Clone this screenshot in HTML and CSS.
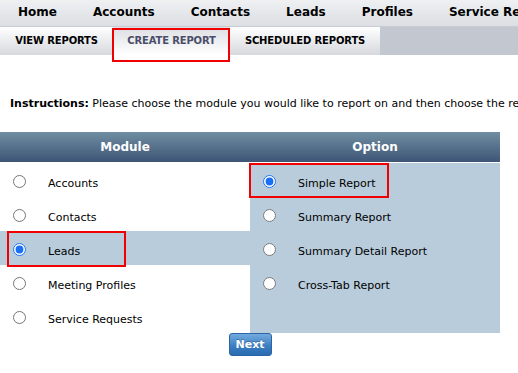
FILE: index.html
```html
<!DOCTYPE html>
<html>
<head>
<meta charset="utf-8">
<link rel="stylesheet" href="styles.css">
</head>
<body>
<div class="page">
  <nav class="topnav">
    <span class="nav-item">Home</span>
    <span class="nav-item">Accounts</span>
    <span class="nav-item">Contacts</span>
    <span class="nav-item">Leads</span>
    <span class="nav-item">Profiles</span>
    <span class="nav-item">Service Requests</span>
  </nav>
  <div class="subtabs">
    <span class="tab tab-view">VIEW REPORTS</span>
    <span class="tab tab-create active">CREATE REPORT</span>
    <span class="tab tab-sched">SCHEDULED REPORTS</span>
    <span class="tab-fill"></span>
  </div>
  <p class="instructions"><b>Instructions:</b> Please choose the module you would like to report on and then choose the report type you would like to create.</p>
  <div class="report-table">
    <div class="head">Module</div>
    <div class="head">Option</div>
    <div class="col col-module">
      <label class="row"><input type="radio" name="module"><span>Accounts</span></label>
      <label class="row"><input type="radio" name="module"><span>Contacts</span></label>
      <label class="row row-selected"><input type="radio" name="module" checked><span>Leads</span></label>
      <label class="row"><input type="radio" name="module"><span>Meeting Profiles</span></label>
      <label class="row"><input type="radio" name="module"><span>Service Requests</span></label>
    </div>
    <div class="col col-option">
      <label class="row"><input type="radio" name="option" checked><span>Simple Report</span></label>
      <label class="row"><input type="radio" name="option"><span>Summary Report</span></label>
      <label class="row"><input type="radio" name="option"><span>Summary Detail Report</span></label>
      <label class="row"><input type="radio" name="option"><span>Cross-Tab Report</span></label>
    </div>
  </div>
  <div class="actions"><button class="btn-next">Next</button></div>

  <div class="mark mark-tab"></div>
  <div class="mark mark-leads"></div>
  <div class="mark mark-simple"></div>
</div>
</body>
</html>
```
FILE: styles.css
```css
html, body {
  margin: 0;
  padding: 0;
  background: #ffffff;
}
body {
  font-family: "DejaVu Sans", Verdana, sans-serif;
  color: #000;
  overflow: hidden;
}
.page {
  position: relative;
  width: 518px;
  height: 373px;
  overflow: hidden;
}
.topnav {
  display: flex;
  height: 26px;
  border-bottom: 1px solid #c9ccd2;
  background: linear-gradient(#eef0f2, #dcdfe3);
  white-space: nowrap;
}
.nav-item {
  padding: 0 18px;
  font-weight: bold;
  font-size: 12px;
  line-height: 24px;
  flex: none;
}
.subtabs {
  display: flex;
  height: 28px;
}
.tab {
  flex: none;
  font-weight: bold;
  font-size: 10px;
  letter-spacing: -0.15px;
  line-height: 28px;
  background: linear-gradient(#ffffff, #d6d8dd);
  box-sizing: border-box;
  text-align: center;
  white-space: nowrap;
}
.tab-view { width: 113px; }
.tab-create { width: 117px; }
.tab-sched { width: 150px; }
.tab.active {
  background: linear-gradient(#dcdee3, #ffffff);
  color: #4a4e68;
}
.tab-fill {
  flex: 1;
  background: #c2c7d0;
}
.instructions {
  margin: 42px 0 0 10px;
  font-size: 11px;
  line-height: 13px;
  white-space: nowrap;
}
.report-table {
  margin-top: 22px;
  width: 500px;
  display: grid;
  grid-template-columns: 250px 250px;
}
.head {
  height: 30px;
  line-height: 30px;
  text-align: center;
  color: #fff;
  font-weight: bold;
  font-size: 12px;
  background: linear-gradient(#6f8ea2, #3e5576);
  margin-bottom: 1px;
}
.col {
  display: flex;
  flex-direction: column;
}
.col-option {
  background: #b9ccdb;
  height: 170px;
}
.row {
  height: 34px;
  box-sizing: border-box;
  padding: 12px 0 0 13px;
  display: flex;
  align-items: flex-start;
  gap: 22px;
  font-size: 11px;
  line-height: 13px;
}
.row span {
  margin-top: 2px;
}
.row input {
  margin: 0;
  width: 13px;
  height: 13px;
  flex: none;
  accent-color: #1a6ff5;
}
.row-selected {
  background: #b9ccdb;
}
.actions {
  width: 500px;
  display: flex;
  justify-content: center;
}
.btn-next {
  width: 43px;
  height: 23px;
  padding: 0;
  margin-top: 0;
  border: 1px solid #2a64a6;
  border-radius: 3px;
  background: linear-gradient(#73abdf, #3a7cc1 60%, #2b6bb0);
  color: #fff;
  font-family: "DejaVu Sans", Verdana, sans-serif;
  font-weight: bold;
  font-size: 11px;
  text-shadow: 0 -1px 0 rgba(0,0,0,0.25);
}
.mark {
  position: absolute;
  border: 2px solid #f00000;
  box-sizing: border-box;
}
.mark-tab { left: 112px; top: 28px; width: 118px; height: 34px; }
.mark-leads { left: 7px; top: 231px; width: 119px; height: 36px; }
.mark-simple { left: 249px; top: 163px; width: 140px; height: 35px; }
```
